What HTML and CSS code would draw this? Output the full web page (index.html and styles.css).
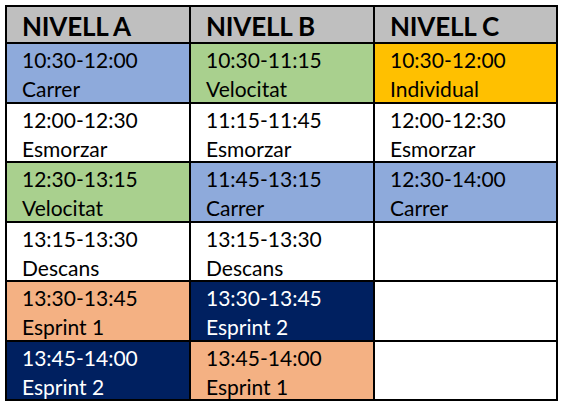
FILE: index.html
```html
<!DOCTYPE html>
<html>
<head>
<meta charset="utf-8">
<link rel="stylesheet" href="styles.css">
</head>
<body>
<div class="sheet">
  <div class="cell head">NIVELL A</div>
  <div class="cell head">NIVELL B</div>
  <div class="cell head">NIVELL C</div>

  <div class="cell blue">10:30-12:00<br>Carrer</div>
  <div class="cell green">10:30-11:15<br>Velocitat</div>
  <div class="cell gold">10:30-12:00<br>Individual</div>

  <div class="cell">12:00-12:30<br>Esmorzar</div>
  <div class="cell">11:15-11:45<br>Esmorzar</div>
  <div class="cell">12:00-12:30<br>Esmorzar</div>

  <div class="cell green">12:30-13:15<br>Velocitat</div>
  <div class="cell blue">11:45-13:15<br>Carrer</div>
  <div class="cell blue">12:30-14:00<br>Carrer</div>

  <div class="cell">13:15-13:30<br>Descans</div>
  <div class="cell">13:15-13:30<br>Descans</div>
  <div class="cell"></div>

  <div class="cell peach">13:30-13:45<br>Esprint 1</div>
  <div class="cell navy">13:30-13:45<br>Esprint 2</div>
  <div class="cell"></div>

  <div class="cell navy">13:45-14:00<br>Esprint 2</div>
  <div class="cell peach">13:45-14:00<br>Esprint 1</div>
  <div class="cell"></div>
</div>
</body>
</html>
```

FILE: styles.css
```css
html, body {
  margin: 0;
  padding: 0;
  background: #ffffff;
}

body {
  padding: 5px 0 0 5px;
  font-family: Lato, "Open Sans", sans-serif;
  color: #000000;
}

.sheet {
  display: grid;
  grid-template-columns: 182px 182px 181px;
  grid-template-rows: 35px repeat(6, 57.5px);
  gap: 2px;
  padding: 2px;
  background: #000000;
  width: max-content;
}

.cell {
  background: #ffffff;
  font-size: 21px;
  line-height: 29px;
  padding: 1px 0 0 15px;
}

.head {
  background: #bfbfbf;
  font-weight: 700;
  font-size: 26px;
  line-height: 35px;
  padding-top: 2px;
  letter-spacing: -0.2px;
}

.blue { background: #8eaadb; }
.green { background: #a9d08e; }
.gold { background: #ffc000; }
.peach { background: #f4b183; }
.navy { background: #002060; color: #ffffff; }
```
